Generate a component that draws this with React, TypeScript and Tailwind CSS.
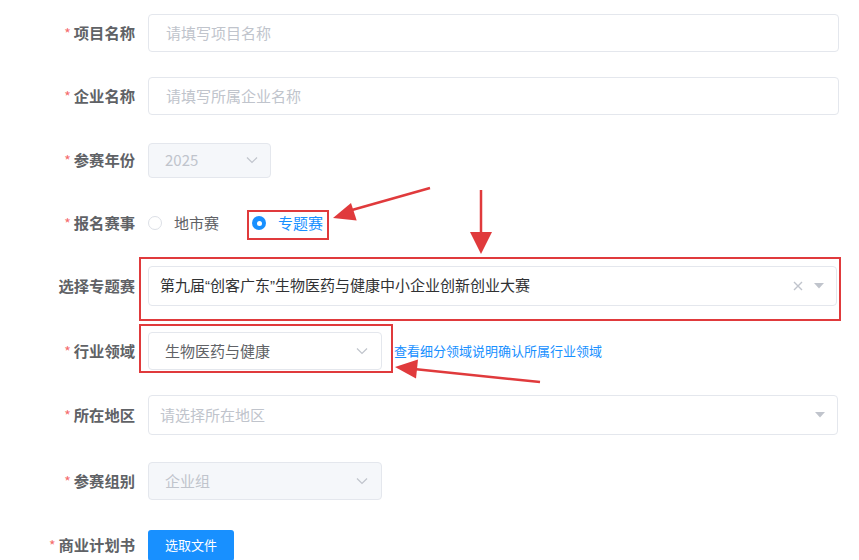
import React from "react";

const FONT = { fontFamily: "'Noto Sans CJK SC', 'Noto Sans', sans-serif" };

function Label({ text, required = true }: { text: string; required?: boolean }) {
  return (
    <div className="w-[135px] shrink-0 flex justify-end items-center text-[15.3px] font-bold text-[#606266] leading-none">
      {required && <span className="text-[#f56c6c] font-normal mr-[3px] text-[14px]">*</span>}
      <span>{text}</span>
    </div>
  );
}

function Chevron() {
  return (
    <svg width="12" height="8" viewBox="0 0 12 8" className="shrink-0">
      <path d="M1 1.5 L6 6.5 L11 1.5" fill="none" stroke="#c0c4cc" strokeWidth="1.2" />
    </svg>
  );
}

function Caret() {
  return (
    <svg width="10" height="6" viewBox="0 0 10 6" className="shrink-0">
      <polygon points="0,0 10,0 5,5.5" fill="#c0c4cc" />
    </svg>
  );
}

function Row({ h, children }: { h: string; children: React.ReactNode }) {
  return <div className={`flex items-center gap-[13px] ${h}`}>{children}</div>;
}

export default function App() {
  return (
    <div className="relative w-[859px] h-[560px] bg-white overflow-hidden" style={FONT}>
      <div className="flex flex-col">
        <Row h="h-[66px]">
          <Label text="项目名称" />
          <div className="w-[691px] h-[38px] border border-[#e4e7ed] rounded-[4px] flex items-center pl-[17px] text-[15px] text-[#c0c4cc]">
            请填写项目名称
          </div>
        </Row>
        <Row h="h-[60px]">
          <Label text="企业名称" />
          <div className="w-[691px] h-[38px] border border-[#e4e7ed] rounded-[4px] flex items-center pl-[17px] text-[15px] text-[#c0c4cc]">
            请填写所属企业名称
          </div>
        </Row>
        <Row h="h-[68px]">
          <Label text="参赛年份" />
          <div className="w-[123px] h-[35px] border border-[#e4e7ed] bg-[#f5f7fa] rounded-[4px] flex items-center justify-between pl-[16px] pr-[12px] text-[15px] text-[#c0c4cc]">
            <span>2025</span>
            <Chevron />
          </div>
        </Row>
        <Row h="h-[58px]">
          <Label text="报名赛事" />
          <div className="flex items-center text-[15px]">
            <div className="flex items-center">
              <span className="w-[14px] h-[14px] rounded-full border border-[#dcdfe6] bg-white" />
              <span className="ml-[12px] text-[#606266]">地市赛</span>
            </div>
            <div className="flex items-center ml-[33px]">
              <span className="w-[14px] h-[14px] rounded-full bg-[#1890ff] flex items-center justify-center">
                <span className="w-[5px] h-[5px] rounded-full bg-white" />
              </span>
              <span className="ml-[12px] text-[#1890ff]">专题赛</span>
            </div>
          </div>
        </Row>
        <Row h="h-[68px]">
          <Label text="选择专题赛" required={false} />
          <div className="w-[689px] h-[40px] border border-[#e4e7ed] rounded-[4px] flex items-center justify-between pl-[11px] pr-[12px] text-[15px] text-[#303133]">
            <span>
              第九届<span style={{ fontFamily: "'Liberation Sans', sans-serif" }}>“</span>创客广东<span style={{ fontFamily: "'Liberation Sans', sans-serif" }}>”</span>生物医药与健康中小企业创新创业大赛
            </span>
            <div className="flex items-center gap-[11px]">
              <svg width="10" height="10" viewBox="0 0 10 10">
                <path d="M1 1 L9 9 M9 1 L1 9" stroke="#c0c4cc" strokeWidth="1.4" />
              </svg>
              <Caret />
            </div>
          </div>
        </Row>
        <Row h="h-[62px]">
          <Label text="行业领域" />
          <div className="flex items-center">
            <div className="w-[234px] h-[38px] border border-[#e4e7ed] rounded-[4px] flex items-center justify-between pl-[16px] pr-[13px] text-[15px] text-[#606266]">
              <span>生物医药与健康</span>
              <Chevron />
            </div>
            <span className="ml-[12px] text-[13px] text-[#1890ff]">查看细分领域说明确认所属行业领域</span>
          </div>
        </Row>
        <Row h="h-[66px]">
          <Label text="所在地区" />
          <div className="w-[690px] h-[40px] border border-[#e4e7ed] rounded-[4px] flex items-center justify-between pl-[11px] pr-[12px] text-[15px] text-[#c0c4cc]">
            <span>请选择所在地区</span>
            <Caret />
          </div>
        </Row>
        <Row h="h-[66px]">
          <Label text="参赛组别" />
          <div className="w-[234px] h-[38px] border border-[#e4e7ed] bg-[#f5f7fa] rounded-[4px] flex items-center justify-between pl-[16px] pr-[13px] text-[15px] text-[#c0c4cc]">
            <span>企业组</span>
            <Chevron />
          </div>
        </Row>
        <Row h="h-[62px]">
          <Label text="商业计划书" />
          <button className="w-[86px] h-[31px] bg-[#1890ff] rounded-[3px] text-white text-[13px] flex items-center justify-center">
            选取文件
          </button>
        </Row>
      </div>

      <svg className="absolute inset-0 pointer-events-none" width="859" height="560" viewBox="0 0 859 560">
        <g fill="none" stroke="#e03a3c" strokeWidth="2">
          <rect x="248" y="211" width="80" height="28" />
          <rect x="140" y="258" width="700" height="62" />
          <rect x="140" y="325" width="252" height="47" />
          <line x1="430" y1="188" x2="352" y2="210" strokeWidth="2.5" />
          <line x1="481" y1="190" x2="481" y2="236" strokeWidth="2.5" />
          <line x1="540" y1="382" x2="414" y2="369" strokeWidth="2.5" />
        </g>
        <g fill="#e03a3c">
          <polygon points="333,218 356.7,220.5 351,203" />
          <polygon points="470,232 492,232 481,254" />
          <polygon points="395,367 418,359.5 416,378.5" />
        </g>
      </svg>
    </div>
  );
}
